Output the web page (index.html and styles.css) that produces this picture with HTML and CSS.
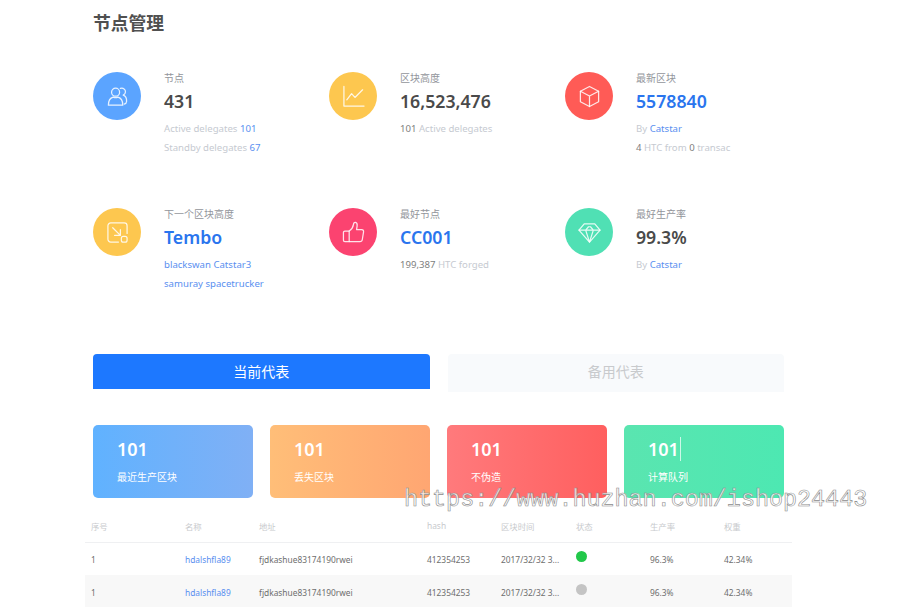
FILE: index.html
```html
<!DOCTYPE html>
<html lang="zh">
<head>
  <meta charset="UTF-8">
  <meta name="viewport" content="width=device-width, initial-scale=1.0">
  <title>节点管理</title>
  <link rel="stylesheet" href="styles.css">
</head>
<body>
  <div class="page">
    <h2 class="page-title">节点管理</h2>

    <!-- 统计信息 -->
    <div class="stats">
      <div class="stat">
        <div class="stat-icon bg-blue">
          <svg viewBox="0 0 24 24"><circle cx="10" cy="7.5" r="4.2"/><path d="M2.5 21c0-5 2-7.5 5-8.3 1.5.6 3.500.6 5 0 3 .8 5 3.300 5 8.300z"/><path d="M15 3.600c3-1 5.500 1 5.300 3.700-.1 1.500-1 2.700-2.300 3.300 2.500 1 3.700 3.400 3.500 6.700-.1 1.500-1.200 2.400-2.500 2.700"/></svg>
        </div>
        <div class="stat-body">
          <div class="stat-label">节点</div>
          <div class="stat-value">431</div>
          <div class="stat-line">Active delegates <span class="link">101</span></div>
          <div class="stat-line">Standby delegates <span class="link">67</span></div>
        </div>
      </div>
      <div class="stat">
        <div class="stat-icon bg-yellow">
          <svg viewBox="0 0 24 24"><path d="M2 1.500v20.500h21"/><path d="M5 15.500l5-6.500 3.500 4 8-8"/></svg>
        </div>
        <div class="stat-body">
          <div class="stat-label">区块高度</div>
          <div class="stat-value">16,523,476</div>
          <div class="stat-line"><span class="dark">101</span> Active delegates</div>
        </div>
      </div>
      <div class="stat">
        <div class="stat-icon bg-red">
          <svg viewBox="0 0 24 24"><path d="M12 1.500l9.500 5v11L12 22.500l-9.500-5v-11z"/><path d="M2.500 6.500L12 11.500l9.500-5M12 11.500v11"/></svg>
        </div>
        <div class="stat-body">
          <div class="stat-label">最新区块</div>
          <div class="stat-value link-value">5578840</div>
          <div class="stat-line">By <span class="link">Catstar</span></div>
          <div class="stat-line"><span class="dark">4</span> HTC from <span class="dark">0</span> transac</div>
        </div>
      </div>
      <div class="stat">
        <div class="stat-icon bg-yellow">
          <svg viewBox="0 0 24 24"><path d="M13 22H5a3 3 0 0 1-3-3V5a3 3 0 0 1 3-3h14a3 3 0 0 1 3 3v8"/><rect x="16" y="16" width="6" height="6" rx="2"/><path d="M7 7l8 8M15 9v6H9"/></svg>
        </div>
        <div class="stat-body">
          <div class="stat-label">下一个区块高度</div>
          <div class="stat-value link-value">Tembo</div>
          <div class="stat-line link">blackswan Catstar3</div>
          <div class="stat-line link">samuray spacetrucker</div>
        </div>
      </div>
      <div class="stat">
        <div class="stat-icon bg-pink">
          <svg viewBox="0 0 24 24"><path d="M7.500 10.500H3a1.500 1.500 0 0 0-1.500 1.500v8A1.500 1.500 0 0 0 3 21.500h4.500z"/><path d="M7.500 10.500c2.500-1.500 4-4 4.500-7 .2-1.500 1-2.200 2-2 1.500.3 2 1.800 1.800 3.500l-.6 4h5.300c1.500 0 2.200 1 2 2.300l-1.300 8c-.2 1.500-1.200 2.200-2.500 2.200H7.500"/></svg>
        </div>
        <div class="stat-body">
          <div class="stat-label">最好节点</div>
          <div class="stat-value link-value">CC001</div>
          <div class="stat-line"><span class="dark">199,387</span> HTC forged</div>
        </div>
      </div>
      <div class="stat">
        <div class="stat-icon bg-green">
          <svg viewBox="0 0 24 24"><path d="M6.500 3h11L23 9.500 12 22 1 9.500z"/><path d="M1 9.500h22M8 9.500l4 12.500 4-12.500M8 9.500l3-3.500h2l3 3.500"/></svg>
        </div>
        <div class="stat-body">
          <div class="stat-label">最好生产率</div>
          <div class="stat-value">99.3%</div>
          <div class="stat-line">By <span class="link">Catstar</span></div>
        </div>
      </div>
    </div>

    <!-- 切换 -->
    <div class="tabs">
      <div class="tab tab-active">当前代表</div>
      <div class="tab">备用代表</div>
    </div>

    <div class="cards">
      <div class="card card-blue">
        <div class="card-num">101</div>
        <div class="card-label">最近生产区块</div>
      </div>
      <div class="card card-orange">
        <div class="card-num">101</div>
        <div class="card-label">丢失区块</div>
      </div>
      <div class="card card-red">
        <div class="card-num">101</div>
        <div class="card-label">不伪造</div>
      </div>
      <div class="card card-green">
        <div class="card-num"><span class="card-caret">101</span></div>
        <div class="card-label">计算队列</div>
      </div>
    </div>

    <table class="node-table">
      <thead>
        <tr>
          <th class="col-id">序号</th>
          <th class="col-name">名称</th>
          <th class="col-addr">地址</th>
          <th class="col-hash">hash</th>
          <th class="col-time">区块时间</th>
          <th class="col-status">状态</th>
          <th class="col-rate">生产率</th>
          <th>权重</th>
        </tr>
      </thead>
      <tbody>
        <tr>
          <td>1</td>
          <td class="link">hdalshfla89</td>
          <td>fjdkashue83174190rwei</td>
          <td>412354253</td>
          <td>2017/32/32 3...</td>
          <td><span class="dot dot-on"></span></td>
          <td>96.3%</td>
          <td>42.34%</td>
        </tr>
        <tr>
          <td>1</td>
          <td class="link">hdalshfla89</td>
          <td>fjdkashue83174190rwei</td>
          <td>412354253</td>
          <td>2017/32/32 3...</td>
          <td><span class="dot dot-off"></span></td>
          <td>96.3%</td>
          <td>42.34%</td>
        </tr>
      </tbody>
    </table>
  </div>

  <div class="watermark">https://www.huzhan.com/ishop24443</div>
</body>
</html>
```

FILE: styles.css
```css
html, body {
  margin: 0;
  height: 607px;
  overflow: hidden;
}
body {
  font-family: "Noto Sans", "Noto Sans CJK SC", sans-serif;
  background-color: #fff;
  color: #444;
  position: relative;
}
.page {
  width: 691px;
  margin-left: 93px;
  padding-top: 11px;
}
.page-title {
  margin: 0;
  font-size: 17.8px;
  line-height: 24px;
  font-weight: 700;
  color: #505050;
}
/* 统计信息 */
.stats {
  display: grid;
  grid-template-columns: repeat(3, 236px);
  grid-auto-rows: 136px;
  margin-top: 37px;
  height: 282px;
}
.stat {
  display: flex;
  gap: 23px;
}
.stat-body {
  margin-top: -1px;
}
.stat-icon {
  width: 48px;
  height: 48px;
  border-radius: 50%;
  flex-shrink: 0;
  display: flex;
  align-items: center;
  justify-content: center;
}
.stat-icon svg {
  width: 23px;
  height: 23px;
  fill: none;
  stroke: rgba(255, 255, 255, 0.85);
  stroke-width: 1.3;
  stroke-linejoin: round;
  stroke-linecap: round;
}
.bg-blue { background-color: #5ba4ff; }
.bg-yellow { background-color: #fdc74f; }
.bg-red { background-color: #ff5b56; }
.bg-pink { background-color: #fb4370; }
.bg-green { background-color: #50e0b4; }
.stat-label {
  font-size: 10px;
  line-height: 14px;
  color: #92959b;
}
.stat-value {
  font-size: 17.7px;
  line-height: 24px;
  font-weight: 600;
  color: #4a4a4a;
  margin-top: 4px;
  margin-bottom: 6px;
}
.stat-value.link-value {
  color: #2a75ee;
}
.stat-line {
  font-size: 9.6px;
  line-height: 19px;
  color: #c6cad1;
}
.link {
  color: #5a8ff0;
}
.dark {
  color: #808080;
}
/* Tabs */
.tabs {
  display: flex;
  gap: 18px;
  align-items: flex-start;
}
.tab {
  flex: 1;
  height: 38px;
  line-height: 36px;
  text-align: center;
  font-size: 14px;
  color: #c8cacd;
  background-color: #f8fafc;
  border-radius: 4px 4px 0 0;
}
.tab.tab-active {
  height: 35px;
  line-height: 35px;
  background-color: #1d78ff;
  color: #fff;
}
/* Thẻ số liệu */
.cards {
  display: grid;
  grid-template-columns: repeat(4, 160px);
  column-gap: 17px;
  margin-top: 33px;
}
.card {
  height: 73px;
  padding: 12px 24px 0;
  box-sizing: border-box;
  border-radius: 5px;
  color: #fff;
}
.card-blue { background: linear-gradient(90deg, #60b2ff, #80b0f5); }
.card-orange { background: linear-gradient(90deg, #ffbe78, #ffa672); }
.card-red { background: linear-gradient(90deg, #ff7a7c, #ff5f5f); }
.card-green { background: linear-gradient(90deg, #5ae5b0, #4de8b2); }
.card-num {
  font-size: 18px;
  line-height: 25px;
  font-weight: 600;
}
.card-caret {
  border-right: 1px solid rgba(255, 255, 255, 0.7);
  padding-right: 1px;
}
.card-label {
  font-size: 10px;
  line-height: 14px;
  margin-top: 8px;
}
/* Bảng */
.node-table {
  width: 707px;
  margin: 10px 0 0 -8px;
  border-collapse: collapse;
  table-layout: fixed;
  font-size: 8.4px;
}
.node-table th,
.node-table td {
  box-sizing: border-box;
  padding: 0 0 0 6px;
  text-align: left;
}
.node-table th {
  height: 34px;
  padding-top: 2px;
  font-weight: 400;
  color: #c8cacd;
  border-bottom: 1px solid #eff0f2;
}
.node-table td {
  height: 33px;
  padding-top: 1px;
  color: #6e6e6e;
  white-space: nowrap;
}
.node-table td.link {
  color: #5a8ff0;
}
.node-table tbody tr:nth-child(even) {
  background-color: #f8f8f8;
}
.col-id { width: 94px; }
.col-name { width: 74px; }
.col-addr { width: 168px; }
.col-hash { width: 74px; }
.col-time { width: 75px; }
.col-status { width: 74px; }
.col-rate { width: 74px; }
.dot {
  display: block;
  width: 11px;
  height: 11px;
  border-radius: 50%;
  margin-top: -5px;
}
.dot-on { background-color: #22c84a; }
.dot-off { background-color: #c4c4c4; }
/* Watermark lies over the cards */
.watermark {
  position: absolute;
  left: 404px;
  top: 485px;
  font-family: "Liberation Mono", monospace;
  font-size: 23.4px;
  line-height: 30px;
  white-space: nowrap;
  color: rgba(255, 255, 255, 0.8);
  -webkit-text-stroke: 0.6px #8c8c8c;
}
```
